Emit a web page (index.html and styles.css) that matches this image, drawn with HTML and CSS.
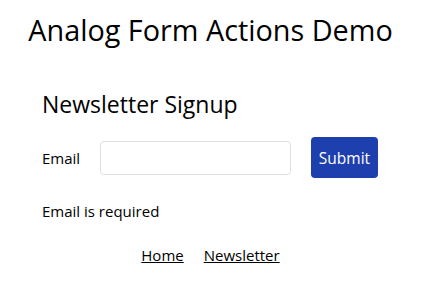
FILE: index.html
```html
<!DOCTYPE html>
<html>
<head>
<meta charset="utf-8">
<link rel="stylesheet" href="styles.css">
</head>
<body>
<div class="app">
  <h1 class="title">Analog Form Actions Demo</h1>
  <section class="card">
    <h2 class="subtitle">Newsletter Signup</h2>
    <form class="form">
      <label class="label" for="email">Email</label>
      <input class="input" id="email" type="email">
      <button class="button" type="button">Submit</button>
    </form>
    <p class="error">Email is required</p>
  </section>
  <nav class="nav">
    <a class="link" href="#">Home</a>
    <a class="link" href="#">Newsletter</a>
  </nav>
</div>
</body>
</html>
```
FILE: styles.css
```css
html, body {
  margin: 0;
  padding: 0;
  background: #ffffff;
}
body {
  font-family: "Open Sans", "Noto Sans", sans-serif;
  color: #000;
}
.app {
  padding-top: 12px;
}
.title {
  margin: 0;
  text-align: center;
  font-size: 28.8px;
  font-weight: 400;
  line-height: 36px;
  white-space: nowrap;
}
.card {
  margin-top: 41px;
  padding: 0 42px;
}
.subtitle {
  margin: 0;
  font-size: 23px;
  font-weight: 400;
  line-height: 30px;
}
.form {
  display: flex;
  align-items: center;
  margin-top: 18px;
}
.label {
  font-size: 15px;
  width: 58px;
}
.input {
  box-sizing: border-box;
  width: 191px;
  height: 34px;
  border: 1px solid #e0e0e0;
  border-radius: 4px;
  padding: 0 8px;
}
.button {
  margin-left: 20px;
  box-sizing: border-box;
  width: 67px;
  height: 41px;
  background: #1e3fae;
  color: #fff;
  border: none;
  border-radius: 4px;
  font-family: inherit;
  font-size: 15.5px;
}
.error {
  margin: 23px 0 0 0;
  font-size: 15px;
  line-height: 20px;
}
.nav {
  display: flex;
  justify-content: center;
  gap: 20px;
  margin-top: 24px;
  line-height: 20px;
}
.link {
  color: #000;
  font-size: 15px;
}
```
